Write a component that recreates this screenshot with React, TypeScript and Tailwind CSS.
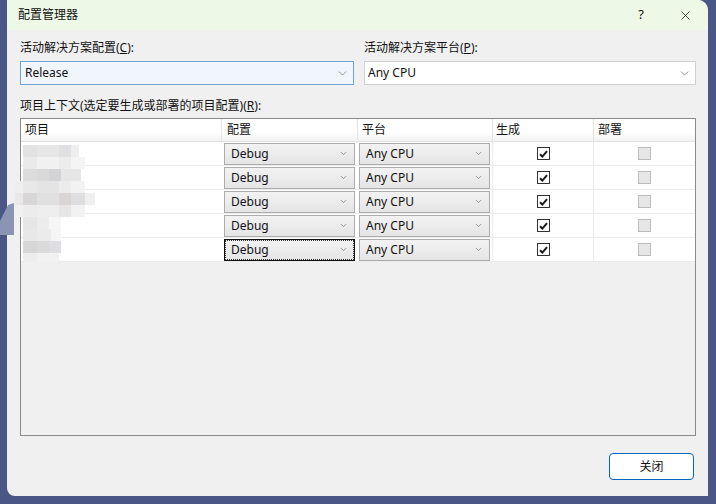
import { ChevronDown, X } from 'lucide-react'

const rows = [0, 1, 2, 3, 4]

const mosaic: [number, number, number, number, string][] = [
  [23, 145, 14, 12, '#e2e2e2'], [37, 145, 22, 12, '#e6e6e6'], [59, 145, 12, 12, '#e0dfe1'], [71, 145, 8, 12, '#eeeeee'],
  [23, 157, 14, 12, '#eaeaea'], [37, 157, 22, 12, '#f1f1f1'], [59, 157, 12, 12, '#ececec'], [71, 157, 14, 12, '#f4f4f4'],
  [23, 169, 14, 12, '#dcdcdc'], [37, 169, 12, 12, '#d9d9d9'], [49, 169, 12, 12, '#d3d3d5'], [61, 169, 20, 12, '#e6e6e6'],
  [15, 181, 8, 12, '#eeeeee'], [23, 181, 14, 12, '#e8e8e8'], [37, 181, 22, 12, '#e4e4e4'], [59, 181, 12, 12, '#ececec'], [71, 181, 14, 12, '#f2f2f2'],
  [15, 193, 8, 12, '#e8e8e8'], [23, 193, 14, 12, '#d8d6d6'], [37, 193, 22, 12, '#e0e0e0'], [59, 193, 12, 12, '#d9d5d4'], [71, 193, 14, 12, '#dedee0'], [85, 193, 10, 12, '#efefef'],
  [15, 205, 8, 12, '#f0f0f0'], [23, 205, 14, 12, '#ececec'], [37, 205, 22, 12, '#eeeeee'], [59, 205, 12, 12, '#e6e6e6'], [71, 205, 14, 12, '#f2f2f2'],
  [23, 217, 14, 12, '#e6e6e6'], [37, 217, 12, 12, '#ececec'], [49, 217, 12, 12, '#f6f6f6'],
  [23, 229, 14, 12, '#e8e8e8'], [37, 229, 14, 12, '#ebebeb'], [51, 229, 10, 12, '#f5f5f5'],
  [23, 241, 14, 12, '#d6d6d6'], [37, 241, 12, 12, '#dadada'], [49, 241, 12, 12, '#dedee2'],
  [23, 253, 14, 9, '#ededed'], [37, 253, 22, 9, '#f2f2f2'],
]

function Check() {
  return (
    <div className="w-[13px] h-[13px] border border-[#333] bg-white flex items-center justify-center">
      <svg width="9" height="8" viewBox="0 0 9 8">
        <path d="M1 4.2 L3.4 6.6 L8 1.2" fill="none" stroke="#1a1a1a" strokeWidth="2" />
      </svg>
    </div>
  )
}

function CellCombo({ text, focus }: { text: string; focus?: boolean }) {
  return (
    <div
      className={
        'h-[22px] w-[131px] flex items-center justify-between pl-[6px] pr-[6px] bg-gradient-to-b from-[#f2f2f2] to-[#e5e5e5] ' +
        (focus ? 'border border-[#111] outline-1 outline-dotted outline-[#333] -outline-offset-2' : 'border border-[#acacac]')
      }
    >
      <span>{text}</span>
      <ChevronDown size={9} strokeWidth={1.5} className="text-[#555]" />
    </div>
  )
}

export default function App() {
  return (
    <div
      className="w-[716px] h-[504px] bg-[#4a5786] relative overflow-hidden text-[12px] text-[#111]"
      style={{ fontFamily: '"Noto Sans", "Noto Sans CJK SC", sans-serif' }}
    >
      <svg className="absolute left-0 top-[195px]" width="14" height="45" viewBox="0 0 14 45">
        <polygon points="0,26 8,10 14,8 14,40 0,40" fill="#8c94b4" />
      </svg>
      <div className="ml-[7px] w-[701px] h-[496px] bg-[#f0f0f0] rounded-tr-[10px] rounded-bl-[8px] overflow-hidden flex flex-col">
        <div className="h-[30px] shrink-0 bg-[#eef8e6] flex items-center pl-[11px]">
          <span className="flex-1">配置管理器</span>
          <span className="w-[46px] text-center text-[13px] pl-[4px]">?</span>
          <div className="w-[46px] flex justify-center">
            <X size={15} strokeWidth={1.2} />
          </div>
        </div>
        <div className="pl-[13px] pr-[12px] flex flex-col">
          <div className="flex gap-[10px] mt-[9px]">
            <div className="w-[334px] flex flex-col">
              <div className="h-[18px] leading-[18px] mb-[4px]">
                活动解决方案配置(<span className="underline">C</span>):
              </div>
              <div className="h-[24px] border border-[#6fa3d8] bg-[#f1f6fd] flex items-center justify-between pl-[4px] pr-[4px]">
                <span>Release</span>
                <ChevronDown size={13} strokeWidth={1.2} className="text-[#555]" />
              </div>
            </div>
            <div className="w-[332px] flex flex-col">
              <div className="h-[18px] leading-[18px] mb-[4px]">
                活动解决方案平台(<span className="underline">P</span>):
              </div>
              <div className="h-[24px] border border-[#d0d0d0] bg-white flex items-center justify-between pl-[3px] pr-[4px]">
                <span>Any CPU</span>
                <ChevronDown size={13} strokeWidth={1.2} className="text-[#555]" />
              </div>
            </div>
          </div>
          <div className="h-[18px] leading-[18px] mt-[12px] mb-[3px]">
            项目上下文(选定要生成或部署的项目配置)(<span className="underline">R</span>):
          </div>
          <div className="relative h-[318px] border border-[#8a8a8a] bg-[#f0f0f0] flex flex-col">
            <div className="h-[23px] shrink-0 flex bg-gradient-to-b from-white from-60% to-[#f2f2f2] border-b border-[#e2e2e2]">
              <div className="w-[201px] pl-[4px] flex items-center border-r border-[#e4e4e4]">项目</div>
              <div className="w-[136px] pl-[5px] flex items-center border-r border-[#e4e4e4]">配置</div>
              <div className="w-[135px] pl-[4px] flex items-center border-r border-[#e4e4e4]">平台</div>
              <div className="w-[101px] pl-[3px] flex items-center border-r border-[#e4e4e4]">生成</div>
              <div className="w-[101px] pl-[4px] flex items-center">部署</div>
            </div>
            {rows.map(i => (
              <div key={i} className="h-[24px] shrink-0 flex bg-white border-b border-[#ebebeb]">
                <div className="w-[201px]" />
                <div className="w-[136px] pl-[2px] flex items-center">
                  <CellCombo text="Debug" focus={i === 4} />
                </div>
                <div className="w-[135px] pl-[1px] flex items-center border-r border-[#ececec]">
                  <CellCombo text="Any CPU" />
                </div>
                <div className="w-[101px] flex items-center justify-center border-r border-[#ececec]">
                  <Check />
                </div>
                <div className="w-[101px] flex items-center justify-center">
                  <div className="w-[13px] h-[13px] border border-[#bcbcbc] bg-[#e6e6e6]" />
                </div>
              </div>
            ))}
            <svg className="absolute left-[-21px] top-[-119px] pointer-events-none" width="120" height="270" viewBox="0 0 120 270" style={{ filter: 'blur(0.4px)' }}>
              {mosaic.map(([x, y, w, h, c], k) => (
                <rect key={k} x={x} y={y} width={w} height={h} fill={c} />
              ))}
            </svg>
          </div>
          <div className="flex justify-end mt-[17px] pr-[2px]">
            <button className="w-[85px] h-[27px] border border-[#0067c0] rounded-[4px] bg-white flex items-center justify-center">
              关闭
            </button>
          </div>
        </div>
      </div>
    </div>
  )
}
